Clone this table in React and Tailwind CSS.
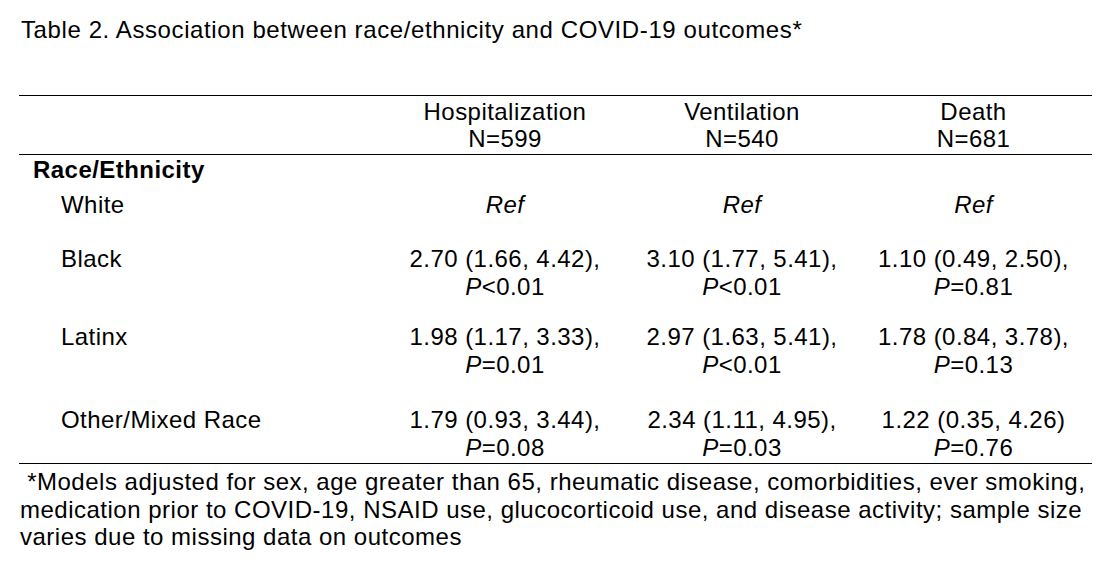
import React from 'react';

const rows = [
  {
    label: 'White',
    gap: 'mt-[7px]',
    vals: [{ ref: true }, { ref: true }, { ref: true }],
  },
  {
    label: 'Black',
    gap: 'mt-[26px]',
    vals: [
      { est: '2.70 (1.66, 4.42),', p: '<0.01' },
      { est: '3.10 (1.77, 5.41),', p: '<0.01' },
      { est: '1.10 (0.49, 2.50),', p: '=0.81' },
    ],
  },
  {
    label: 'Latinx',
    gap: 'mt-[22px]',
    vals: [
      { est: '1.98 (1.17, 3.33),', p: '=0.01' },
      { est: '2.97 (1.63, 5.41),', p: '<0.01' },
      { est: '1.78 (0.84, 3.78),', p: '=0.13' },
    ],
  },
  {
    label: 'Other/Mixed Race',
    gap: 'mt-[27px]',
    vals: [
      { est: '1.79 (0.93, 3.44),', p: '=0.08' },
      { est: '2.34 (1.11, 4.95),', p: '=0.03' },
      { est: '1.22 (0.35, 4.26)', p: '=0.76' },
    ],
  },
];

const headers = [
  { name: 'Hospitalization', n: 'N=599' },
  { name: 'Ventilation', n: 'N=540' },
  { name: 'Death', n: 'N=681' },
];

const cols = 'grid grid-cols-[362px_248px_226px_237px]';

function Cell({ v }) {
  if (v.ref) {
    return <div className="text-center italic">Ref</div>;
  }
  return (
    <div className="text-center whitespace-nowrap">
      <div>{v.est}</div>
      <div>
        <span className="italic">P</span>
        {v.p}
      </div>
    </div>
  );
}

export default function App() {
  return (
    <div className="w-[1108px] h-[566px] overflow-hidden bg-white text-black font-['Liberation_Sans',Arial,sans-serif] text-[24px] leading-[28px] tracking-[0.45px]">
      <p className="pl-[21px] pt-[16px] tracking-[0.6px]">
        Table 2. Association between race/ethnicity and COVID-19 outcomes*
      </p>

      <div className="ml-[19px] w-[1073px] mt-[51px]">
        {/* Header */}
        <div className={`${cols} h-[60px] border-y border-black pt-[2px] leading-[27px]`}>
          <div />
          {headers.map(h => (
            <div key={h.name} className="text-center">
              <div>{h.name}</div>
              <div>{h.n}</div>
            </div>
          ))}
        </div>

        <div className="mt-[1px] pl-[14px] font-bold">Race/Ethnicity</div>

        {rows.map(r => (
          <div key={r.label} className={`${cols} ${r.gap}`}>
            <div className="pl-[42px]">{r.label}</div>
            {r.vals.map((v, i) => (
              <Cell key={i} v={v} />
            ))}
          </div>
        ))}

        <div className="mt-[1px] border-t border-black" />
      </div>

      {/* Footnote */}
      <div className="pl-[20px] pt-[4px] leading-[27.5px] tracking-[0.5px] whitespace-nowrap">
        <div>&nbsp;*Models adjusted for sex, age greater than 65, rheumatic disease, comorbidities, ever smoking,</div>
        <div>medication prior to COVID-19, NSAID use, glucocorticoid use, and disease activity; sample size</div>
        <div>varies due to missing data on outcomes</div>
      </div>
    </div>
  );
}
